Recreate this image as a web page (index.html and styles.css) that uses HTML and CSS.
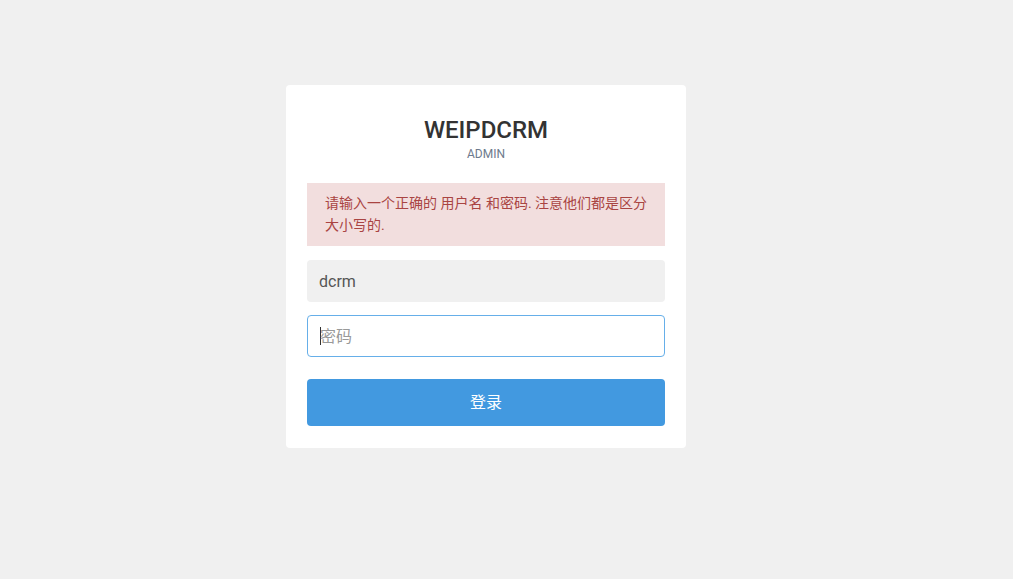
FILE: index.html
```html
<!DOCTYPE html>
<html lang="zh-CN">
<head>
    <meta charset="UTF-8">
    <title>WEIPDCRM</title>
    <link rel="stylesheet" href="styles.css">
</head>
<body>
  <div class="login-box">
    <div class="brand">
      <h1 class="title">WEIPDCRM</h1>
      <p class="subtitle">ADMIN</p>
    </div>
    <div class="alert">请输入一个正确的 用户名 和密码. 注意他们都是区分大小写的.</div>
    <form class="form">
      <input class="field field-filled" type="text" value="dcrm">
      <div class="field field-focus"><span class="caret"></span><span class="placeholder">密码</span></div>
      <button class="submit" type="button">登录</button>
    </form>
  </div>
</body>
</html>
```

FILE: styles.css
```css
html, body {
    margin: 0;
    padding: 0;
}
body {
    background: #f0f0f0;
    font-family: Roboto, "Noto Sans CJK SC", sans-serif;
    display: flex;
    justify-content: center;
    padding: 85px 41px 0 0;
    height: 579px;
    box-sizing: border-box;
}
.login-box {
    width: 400px;
    height: 363px;
    box-sizing: border-box;
    background: #fff;
    border-radius: 4px;
    padding: 28px 21px 22px;
}
.brand {
    text-align: center;
}
.title {
    margin: 0;
    font-size: 24px;
    font-weight: 500;
    line-height: 34px;
    color: #333;
}
.subtitle {
    margin: 0;
    font-size: 12px;
    line-height: 14px;
    color: #6d7a8c;
}
.alert {
    margin-top: 22px;
    background: #f2dede;
    color: #a94442;
    font-size: 14px;
    line-height: 22px;
    padding: 9px 14px 10px 18px;
}
.form {
    display: flex;
    flex-direction: column;
    margin: 0;
    padding-top: 14px;
}
.field {
    height: 42px;
    box-sizing: border-box;
    border-radius: 4px;
    font-family: Roboto, "Noto Sans CJK SC", sans-serif;
    font-size: 16px;
    padding: 0 12px;
    outline: none;
}
.field-filled {
    border: none;
    background: #f0f0f0;
    color: #555;
}
.field-focus {
    margin-top: 13px;
    border: 1px solid #66afe9;
    background: #fff;
    display: flex;
    align-items: center;
    padding-bottom: 2px;
}
.caret {
    width: 1px;
    height: 18px;
    margin-top: 2px;
    background: #333;
}
.placeholder {
    color: #999;
    margin-left: -1px;
}
.submit {
    margin-top: 22px;
    height: 47px;
    padding: 0 0 3px;
    border: none;
    border-radius: 4px;
    background: #4299e0;
    color: #fff;
    font-family: Roboto, "Noto Sans CJK SC", sans-serif;
    font-size: 16px;
}
```
